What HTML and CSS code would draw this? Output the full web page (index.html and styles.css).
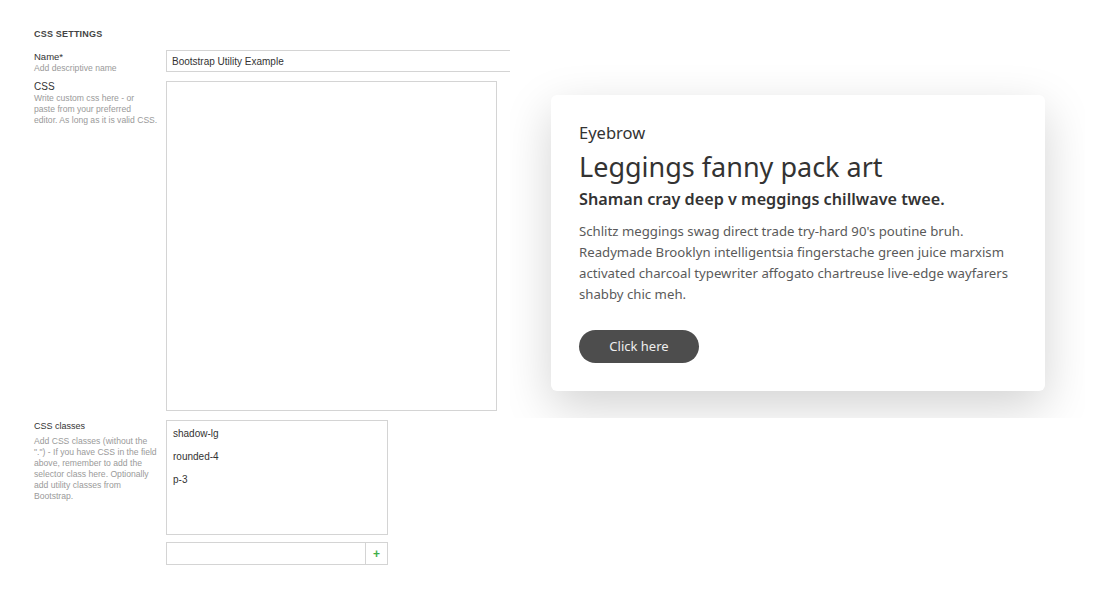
FILE: index.html
```html
<!DOCTYPE html>
<html>
    <head>
        <title>CSS settings</title>
        <link rel="stylesheet" href="styles.css">
    </head>
    <body>
        <div class="page">
            <div class="settings">
                <h5 class="settings-title">CSS SETTINGS</h5>
                <div class="field-row">
                    <div class="field-label">
                        <div class="label-name">Name*</div>
                        <div class="label-desc name-desc">Add descriptive name</div>
                    </div>
                    <div class="field-input">
                        <input class="text-input name-input" type="text" value="Bootstrap Utility Example">
                    </div>
                </div>
                <div class="field-row">
                    <div class="field-label">
                        <div class="label-name big">CSS</div>
                        <div class="label-desc">Write custom css here - or<br>paste from your preferred<br>editor. As long as it is valid CSS.</div>
                    </div>
                    <div class="field-input">
                        <textarea class="css-area"></textarea>
                    </div>
                </div>
                <div class="field-row">
                    <div class="field-label">
                        <div class="label-name classes">CSS classes</div>
                        <div class="label-desc">Add CSS classes (without the<br>".") - If you have CSS in the field<br>above, remember to add the<br>selector class here. Optionally<br>add utility classes from<br>Bootstrap.</div>
                    </div>
                    <div class="field-input">
                        <div class="class-list">
                            <div class="class-item">shadow-lg</div>
                            <div class="class-item">rounded-4</div>
                            <div class="class-item">p-3</div>
                        </div>
                        <div class="add-row">
                            <input class="add-input" type="text">
                            <div class="add-btn">+</div>
                        </div>
                    </div>
                </div>
            </div>
            <div class="preview">
                <div class="card">
                    <div class="eyebrow">Eyebrow</div>
                    <h2 class="card-title">Leggings fanny pack art</h2>
                    <h4 class="card-subtitle">Shaman cray deep v meggings chillwave twee.</h4>
                    <p class="card-text">Schlitz meggings swag direct trade try-hard 90's poutine bruh. Readymade Brooklyn intelligentsia fingerstache green juice marxism activated charcoal typewriter affogato chartreuse live-edge wayfarers shabby chic meh.</p>
                    <a class="card-btn">Click here</a>
                </div>
            </div>
        </div>
    </body>
</html>
```

FILE: styles.css
```css
body {
    margin: 0;
    background-color: #fff;
    font-family: "Liberation Sans", Arial, sans-serif;
    color: #333;
}
.page {
    display: flex;
    align-items: flex-start;
    padding: 29px 0 0 34px;
}
.settings {
    width: 476px;
}
.settings-title {
    margin: 0 0 11px 0;
    font-size: 9px;
    line-height: 10px;
    font-weight: bold;
    color: #444;
    letter-spacing: 0.2px;
}
.field-row {
    display: flex;
    margin-bottom: 9px;
}
.field-label {
    width: 132px;
    flex-shrink: 0;
}
.label-name {
    font-size: 9.5px;
    color: #333;
    line-height: 12px;
    margin-top: 1px;
}
.label-name.big {
    font-size: 10px;
    line-height: 12px;
    margin-top: 0;
}
.label-name.classes {
    font-size: 9px;
    line-height: 12px;
    margin-top: 0;
    margin-bottom: 4px;
}
.label-desc {
    font-size: 8.6px;
    line-height: 11px;
    color: #9a9a9a;
    white-space: nowrap;
}
.name-desc {
    margin-bottom: -2px;
}
.field-input {
    flex: 1;
}
.text-input {
    box-sizing: border-box;
    height: 22px;
    border: 1px solid #d4d4d4;
    padding: 0 5px;
    font-family: "Liberation Sans", Arial, sans-serif;
    font-size: 10px;
    color: #333;
    outline: none;
}
.name-input {
    width: 344px;
    border-right: none;
}
.css-area {
    display: block;
    box-sizing: border-box;
    width: 331px;
    height: 330px;
    border: 1px solid #d4d4d4;
    resize: none;
    margin: 0;
}
.class-list {
    box-sizing: border-box;
    width: 222px;
    height: 115px;
    border: 1px solid #d4d4d4;
    padding: 7px 6px;
}
.class-item {
    font-size: 10px;
    line-height: 12px;
    margin-bottom: 11px;
    color: #333;
}
.add-row {
    display: flex;
    width: 222px;
    height: 23px;
    margin-top: 7px;
    box-sizing: border-box;
    border: 1px solid #d4d4d4;
}
.add-input {
    flex: 1;
    border: none;
    outline: none;
    min-width: 0;
}
.add-btn {
    width: 21px;
    border-left: 1px solid #d4d4d4;
    display: flex;
    align-items: center;
    justify-content: center;
    color: #3fae49;
    font-weight: bold;
    font-size: 12px;
}
.preview {
    width: 575px;
    height: 363px;
    margin-top: 26px;
    padding: 40px 40px 0 41px;
    box-sizing: border-box;
    overflow: hidden;
}
.card {
    width: 494px;
    height: 296px;
    box-sizing: border-box;
    background-color: #fff;
    border-radius: 6px;
    box-shadow: 0 16px 48px rgba(0, 0, 0, 0.175);
    padding: 28px 28px 0 28px;
}
.eyebrow {
    font-family: "Noto Sans", sans-serif;
    font-size: 16.5px;
    color: #333;
    line-height: 20px;
}
.card-title {
    font-family: "Noto Sans", sans-serif;
    font-weight: normal;
    font-size: 27px;
    color: #333;
    margin: 8px 0 6px 0;
    line-height: 32px;
}
.card-subtitle {
    font-family: "Noto Sans", sans-serif;
    font-weight: 600;
    font-size: 16.2px;
    color: #333;
    margin: 0 0 12px 0;
    line-height: 20px;
}
.card-text {
    font-family: "Noto Sans", sans-serif;
    font-size: 13.2px;
    line-height: 21px;
    color: #5a5a5a;
    margin: 0 0 25px 0;
}
.card-btn {
    display: inline-block;
    width: 120px;
    height: 33px;
    line-height: 33px;
    text-align: center;
    border-radius: 17px;
    background-color: #4d4d4d;
    color: #eee;
    font-family: "Noto Sans", sans-serif;
    font-size: 13px;
}
```
